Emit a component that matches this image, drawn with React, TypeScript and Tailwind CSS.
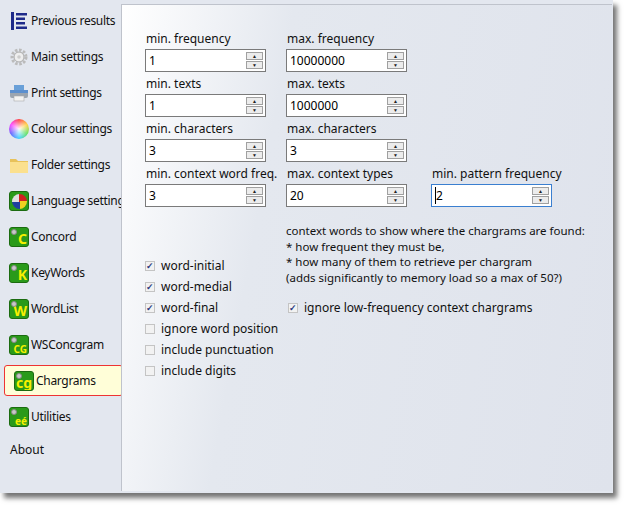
import React from "react";

const font = { fontFamily: '"Segoe UI", "Noto Sans", "Open Sans", sans-serif' };

function Badge({ letter, bg = "bg-[#2a9a1a]", small }: { letter: string; bg?: string; small?: boolean }) {
  return (
    <div className={`relative shrink-0 w-5 h-5 rounded-[3px] ${bg} border border-[#1b6b10] flex items-end justify-end overflow-hidden`}>
      <span className="absolute left-[1px] top-[1px] w-[6px] h-[6px] rounded-full bg-[#c8c8c8] border border-[#888]" />
      <span className={`font-bold leading-none text-[#f6f000] pr-[1px] ${small ? "text-[10px]" : "text-[14px]"}`}>{letter}</span>
    </div>
  );
}

function Icon({ kind }: { kind: string }) {
  switch (kind) {
    case "prev":
      return (
        <svg className="shrink-0" width="20" height="20" viewBox="0 0 20 20">
          <rect x="2" y="1" width="3" height="18" fill="#1e2a8a" />
          <rect x="7" y="2" width="11" height="2.5" fill="#1e2a8a" />
          <rect x="7" y="6.5" width="9" height="2.5" fill="#1e2a8a" />
          <rect x="7" y="11" width="9" height="2.5" fill="#1e2a8a" />
          <rect x="7" y="15.5" width="11" height="2.5" fill="#1e2a8a" />
        </svg>
      );
    case "main":
      return (
        <svg className="shrink-0" width="20" height="20" viewBox="0 0 20 20">
          <circle cx="10" cy="10" r="7" fill="none" stroke="#bbb" strokeWidth="3" strokeDasharray="2.5 1.6" />
          <circle cx="10" cy="10" r="5" fill="#eee" stroke="#aaa" />
          <circle cx="10" cy="10" r="1.8" fill="#ccc" />
        </svg>
      );
    case "print":
      return (
        <svg className="shrink-0" width="20" height="20" viewBox="0 0 20 20">
          <rect x="5" y="2" width="10" height="6" fill="#6aa0d8" />
          <rect x="1" y="7" width="18" height="8" rx="2" fill="#9aa4b0" />
          <rect x="1" y="7" width="18" height="3" fill="#5b8fcf" />
          <rect x="5" y="13" width="10" height="5" fill="#f3f3f3" stroke="#aaa" strokeWidth="0.6" />
        </svg>
      );
    case "colour":
      return (
        <div className="shrink-0 w-5 h-5 rounded-full" style={{ background: "conic-gradient(#ff4040, #ffd040, #60e060, #40d0ff, #6060ff, #ff40ff, #ff4040)" }}>
          <div className="w-5 h-5 rounded-full bg-[radial-gradient(circle,rgba(255,255,255,0.95),rgba(255,255,255,0)_70%)]" />
        </div>
      );
    case "folder":
      return (
        <svg className="shrink-0" width="20" height="20" viewBox="0 0 20 20">
          <path d="M1 4h6l2 2h10v12H1z" fill="#e8c25a" />
          <rect x="1" y="7" width="18" height="11" fill="#fbe08e" />
        </svg>
      );
    case "lang":
      return (
        <div className="relative shrink-0 w-5 h-5 rounded-[3px] bg-[#2a9a1a] border border-[#1b6b10] overflow-hidden">
          <div className="absolute left-[2px] top-[2px] w-[15px] h-[15px] rounded-full" style={{ background: "conic-gradient(#d02020 0 25%, #f0d020 0 50%, #2040a0 0 75%, #e0e0e0 0)" }} />
        </div>
      );
    case "C": return <Badge letter="C" />;
    case "K": return <Badge letter="K" />;
    case "W": return <Badge letter="W" />;
    case "CG": return <Badge letter="CG" small />;
    case "cg": return <Badge letter="cg" />;
    case "eé": return <Badge letter="eé" small />;
    default: return <div className="w-5 h-5" />;
  }
}

const nav = [
  ["prev", "Previous results"],
  ["main", "Main settings"],
  ["print", "Print settings"],
  ["colour", "Colour settings"],
  ["folder", "Folder settings"],
  ["lang", "Language settings"],
  ["C", "Concord"],
  ["K", "KeyWords"],
  ["W", "WordList"],
  ["CG", "WSConcgram"],
  ["cg", "Chargrams"],
  ["eé", "Utilities"],
];

function Spin({ value, focus }: { value: string; focus?: boolean }) {
  return (
    <div className={`w-[121px] h-[23px] bg-white flex items-center border ${focus ? "border-[#3a7fd0]" : "border-[#7a7a7a]"}`}>
      <span className="flex-1 pl-[3px] text-[12px] text-black">{focus ? <span className="border-l border-black">2</span> : value}</span>
      <div className="flex flex-col gap-[1px] mr-[2px]">
        {["▲", "▼"].map((a) => (
          <div key={a} className="w-[17px] h-[8px] border border-[#a0a0a0] bg-[#ececec] flex items-center justify-center text-[5px] text-[#222] leading-none">{a}</div>
        ))}
      </div>
    </div>
  );
}

function Field({ label, value, focus }: { label: string; value: string; focus?: boolean }) {
  return (
    <div className="flex flex-col w-[121px]">
      <span className="text-[12px] leading-[16px] mb-[2px] pl-[1px] text-[#111] whitespace-nowrap">{label}</span>
      <Spin value={value} focus={focus} />
    </div>
  );
}

function Check({ label, on }: { label: string; on?: boolean }) {
  return (
    <div className="flex items-center gap-[6px] h-[21px]">
      <div className="w-[10px] h-[10px] border border-[#c4c4c4] bg-[#f2f2f2] flex items-center justify-center text-[9px] font-bold text-[#2b3a80] leading-none">{on ? "✓" : ""}</div>
      <span className="text-[12px] text-[#111] whitespace-nowrap">{label}</span>
    </div>
  );
}

export default function App() {
  return (
    <div className="w-[628px] h-[509px] bg-white" style={font}>
      <div className="w-[613px] h-[493px] flex bg-[#e3e7ef] shadow-[4px_5px_5px_rgba(0,0,0,0.55)]">
        <div className="w-[121px] shrink-0 flex flex-col pt-[5px]">
          {nav.map(([k, t]) => (
            <div key={t} className={`h-[31px] mb-[5px] flex items-center gap-[2px] pl-[9px] ${k === "cg" ? "ml-[4px] pl-[5px] mr-[-2px] bg-[#fffed8] border border-[#e33] rounded-[3px]" : ""}`}>
              <Icon kind={k} />
              <span className="text-[12px] tracking-[-0.3px] text-[#111] whitespace-nowrap">{t}</span>
            </div>
          ))}
          <div className="h-[26px] flex items-center pl-[10px] text-[12px] text-[#111]">About</div>
        </div>
        <div className="flex-1 mt-[4px] mb-[2px] mr-[1px] border-l border-t border-[#bfc3cc] bg-[linear-gradient(100deg,#ffffff_0%,#e4e8ef_30%,#dfe3ec_100%)] pl-[23px] pt-[26px]">
          <div className="flex flex-col gap-[4px]">
            <div className="flex gap-[20px]"><Field label="min. frequency" value="1" /><Field label="max. frequency" value="10000000" /></div>
            <div className="flex gap-[20px]"><Field label="min. texts" value="1" /><Field label="max. texts" value="1000000" /></div>
            <div className="flex gap-[20px]"><Field label="min. characters" value="3" /><Field label="max. characters" value="3" /></div>
            <div className="flex gap-[20px]">
              <Field label="min. context word freq." value="3" />
              <Field label="max. context types" value="20" />
              <div className="ml-[4px]"><Field label="min. pattern frequency" value="2" focus /></div>
            </div>
          </div>
          <div className="flex mt-[16px]">
            <div className="w-[141px] pt-[32px] flex flex-col">
              <Check label="word-initial" on />
              <Check label="word-medial" on />
              <Check label="word-final" on />
              <Check label="ignore word position" />
              <Check label="include punctuation" />
              <Check label="include digits" />
            </div>
            <div className="flex flex-col">
              <p className="text-[11.5px] leading-[15.5px] text-[#111] whitespace-nowrap">
                context words to show where the chargrams are found:<br />
                * how frequent they must be,<br />
                * how many of them to retrieve per chargram<br />
                (adds significantly to memory load so a max of 50?)
              </p>
              <div className="mt-[12px] ml-[2px]"><Check label="ignore low-frequency context chargrams" on /></div>
            </div>
          </div>
        </div>
      </div>
    </div>
  );
}
